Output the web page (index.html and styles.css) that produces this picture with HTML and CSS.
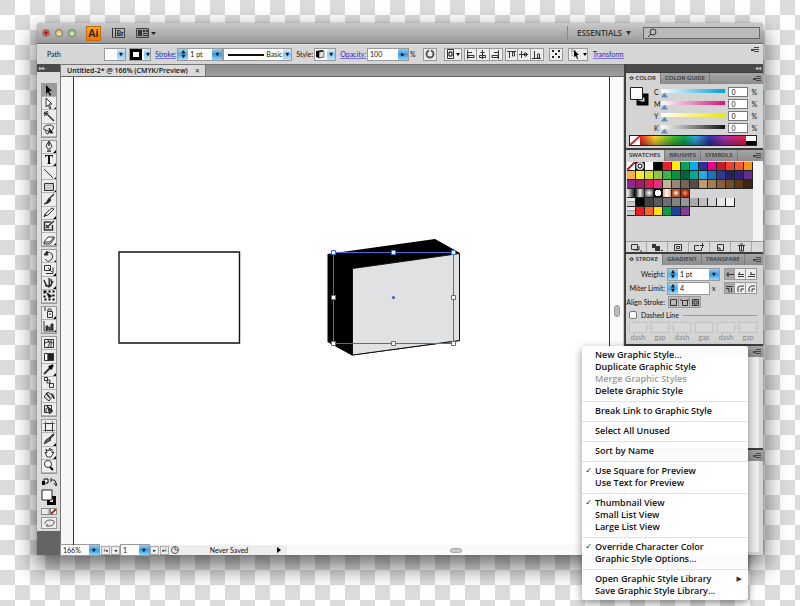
FILE: index.html
```html
<!DOCTYPE html>
<html lang="en">
<head>
<meta charset="utf-8">
<title>Untitled-2</title>
<link rel="stylesheet" href="styles.css">
</head>
<body>
<div class="window">
  <header class="titlebar">
    <button class="light red" aria-label="Close"></button>
    <button class="light amber" aria-label="Minimize"></button>
    <button class="light green" aria-label="Zoom"></button>
    <span class="logo">Ai</span>
    <button class="bridge" aria-label="Bridge"><b>Br</b></button>
    <button class="arrange" aria-label="Arrange documents"><svg width="20" height="10"><path d="M.5.5h12v9H.5z" fill="#999" stroke="#444"/><path d="M2 2h4v6H2zM7 2h2v2H7zM10 2h2v2h-2zM7 5h5v1H7zM7 7h5v1H7z" fill="#333"/><path d="M15 4h5l-2.500 3z" fill="#222"/></svg></button>
    <span class="grow"></span>
    <button class="workspace">ESSENTIALS <svg width="5" height="4"><path d="M0 0h5L2.500 4z" fill="#333"/></svg></button>
    <label class="search"><svg width="10" height="10" fill="none" stroke="#333"><circle cx="6" cy="4" r="3"/><path d="M4 6L1 9"/></svg><input aria-label="Search"></label>
  </header>

  <div class="controlbar">
    <span class="path-label">Path</span>
    <span class="combo fill"><select aria-label="Fill"><option></option></select></span>
    <span class="combo stroke-color"><i class="ring"></i><select aria-label="Stroke colour"><option></option></select></span>
    <a href="#" class="wide">Stroke:</a>
    <span class="combo weight"><i class="spin"></i><input value="1 pt" aria-label="Stroke weight"></span>
    <span class="combo brush"><i class="line"></i><select aria-label="Brush"><option>Basic</option></select></span>
    <span class="wide">Style:</span>
    <span class="combo style"><svg width="10" height="10"><path d="M1 2l6-1 2 1v6L4 9 1 8z"/><path d="M4 3l5-1v6l-5 1z" fill="#ddd" stroke="#000" stroke-width=".5"/></svg><select aria-label="Graphic style"><option></option></select></span>
    <a href="#" class="wide">Opacity:</a>
    <span class="combo opacity"><input value="100" aria-label="Opacity"></span>
    <span>%</span>
    <button class="icon first" aria-label="Recolor"><svg width="12" height="12"><circle cx="6" cy="6" r="3.500" fill="#eee" stroke="#555" stroke-width="2"/><path d="M6 1v3" stroke="#ddd" stroke-width="2"/></svg></button>
    <button class="icon drop first" aria-label="Align to"><svg width="16" height="12"><path d="M2.500 1.500h6v9h-6z" fill="none" stroke="#333"/><path d="M4 4h3v4H4z" fill="#fff" stroke="#000"/><path d="M11 5h4l-2 3z"/></svg></button>
    <span class="group" id="align-h"></span>
    <span class="group" id="align-v"></span>
    <button class="icon wide" aria-label="Isolate"><svg width="12" height="12"><path d="M2 2h2v2H2zM8 2h2v2H8zM2 8h2v2H2zM8 8h2v2H8zM5 5h2v2H5z" fill="#222"/></svg></button>
    <button class="icon drop wide" aria-label="Select similar"><svg width="18" height="12"><path d="M2 3h6M3 1v7" stroke="#666" stroke-dasharray="1 1"/><path d="M5 2l5 5H8l1 4H8L7 8 5 9zM14 5h4l-2 3z"/></svg></button>
    <a href="#" class="wide">Transform</a>
    <span class="grow"></span>
    <button class="panel-menu high" aria-label="Panel menu"></button>
  </div>

  <div class="workspace-area">
    <aside class="toolbox">
      <div class="rail-head">▸▸</div>
      <div class="tools" id="tools"></div>
      <div class="color-tools">
        <svg width="16" height="9"><path d="M3 1h4v4H3z" fill="#fff" stroke="#000"/><path d="M1 3h3v4H1z" fill="#000"/><path d="M10 2h3q2 0 2 4M10 0v4M13 5l2 3 1-3" fill="none" stroke="#222"/></svg>
        <svg width="16" height="17"><path d="M7.500 8.500h6v6h-6z" fill="none" stroke="#000" stroke-width="3"/><path d="M1 1h10v10H1z" fill="#fff" stroke="#222"/></svg>
        <div class="modes"><i></i><i></i><i></i></div>
        <button class="screen" aria-label="Screen mode"><svg width="14" height="10" fill="none" stroke="#555"><path d="M3 6q0-4 5-4t4 3-4 3H4l2-2"/></svg></button>
      </div>
    </aside>

    <main class="document">
      <div class="tabs"><button class="tab">Untitled-2* @ 166% (CMYK/Preview)<span>✕</span></button></div>
      <div class="canvas-row">
        <div class="margin"></div>
        <div class="artboard">
          <svg class="drawing" width="346" height="122" viewBox="117 237 346 122">
            <path d="M119 252h120.500v91H119z" fill="#fff" stroke="#111" stroke-width="1.400"/>
            <path d="M327.500 254L435 239l25 14v88l-108 14.500-24.500-13.500z"/>
            <path d="M352.500 268.500L459.500 253.500v87l-107 14.500z" fill="#e0e1e3" stroke="#111"/>
            <path d="M333.500 252.500h120v91h-120z" fill="none" stroke="#4169e1"/>
            <g fill="#fff" stroke="#4169e1"><path d="M331.500 250.500h4v4h-4zM391.500 250.500h4v4h-4zM451.500 250.500h4v4h-4zM331.500 295.500h4v4h-4zM451.500 295.500h4v4h-4zM331.500 341.500h4v4h-4zM391.500 341.500h4v4h-4zM451.500 341.500h4v4h-4z"/></g>
            <circle cx="393.500" cy="297.500" r="1.600" fill="#4060c8"/>
          </svg>
        </div>
        <div class="vscroll"><i></i></div>
      </div>
      <footer class="status">
        <span class="combo zoom"><input value="166%" aria-label="Zoom level"></span>
        <button aria-label="First artboard">I◂</button><button aria-label="Previous artboard">◂</button>
        <span class="combo page"><input value="1" aria-label="Artboard"></span>
        <button aria-label="Next artboard">▸</button><button aria-label="Last artboard">▸I</button>
        <svg width="10" height="10" fill="none" stroke="#555"><circle cx="5" cy="5" r="3.500"/><path d="M5 2v3h3"/></svg>
        <span class="saved">Never Saved</span>
        <svg class="more" width="5" height="8"><path d="M0 1l4 3-4 3z"/></svg>
        <div class="hscroll"><i></i></div>
      </footer>
    </main>

    <aside class="panels">
      <div class="rail-head right">◂◂</div>
      <section class="panel">
        <div class="panel-tabs"><button class="on">≎ COLOR</button><button>COLOR GUIDE</button><span class="grow"></span><button class="panel-menu" aria-label="Color menu"></button></div>
        <div class="color-body">
          <svg width="20" height="20"><path d="M8.500 8.500h8v8h-8z" fill="none" stroke="#000" stroke-width="4"/><path d="M12 8v5H8" fill="none" stroke="#fff"/><path d="M.5.5h12v12H.5z" fill="#fff" stroke="#222"/></svg>
          <div class="sliders" id="sliders"></div>
        </div>
        <div class="spectrum"><svg width="10" height="9"><path d="M0 0h10v9H0z" fill="#fff"/><path d="M0 9L10 0" stroke="#d8202f" stroke-width="2"/></svg><i class="hues"></i><i class="bw"></i></div>
      </section>

      <section class="panel">
        <div class="panel-tabs"><button class="on">SWATCHES</button><button>BRUSHES</button><button>SYMBOLS</button><span class="grow"></span><button class="panel-menu" aria-label="Swatches menu"></button></div>
        <div class="swatch-body"><div class="swatches" id="swatches"></div><div class="scroll"></div></div>
        <div class="swatch-foot">
          <button aria-label="Libraries"><svg width="12" height="9" fill="none" stroke="#333"><path d="M1.500 1.500h6v5h-6zM4 7h5V3M10 8h2"/></svg></button>
          <button aria-label="Kinds"><svg width="12" height="9"><path d="M1 1h4v4H1zM4 3h5v5H4zM10 7h2v1h-2z" fill="#333"/></svg></button>
          <button aria-label="Options"><svg width="12" height="9" fill="none" stroke="#333"><path d="M2.500 1.500h7v6h-7zM4.500 3.500h3v2h-3z"/></svg></button>
          <button aria-label="New group"><svg width="12" height="9" fill="none" stroke="#333"><path d="M6 2.500H1.500v5h7V5M7 2.500h4M9.500 0v5"/></svg></button>
          <button aria-label="New swatch"><svg width="12" height="9" fill="none" stroke="#333"><path d="M3.500 1.500h6v6h-6zM3 5h3v3"/></svg></button>
          <button aria-label="Delete"><svg width="12" height="9" fill="none" stroke="#333"><path d="M3 2.500h7M5 1h3M4.500 3v5h4V3M6.500 3v5"/></svg></button>
        </div>
      </section>

      <section class="panel">
        <div class="panel-tabs"><button class="on">≎ STROKE</button><button>GRADIENT</button><button>TRANSPARE</button><span class="grow"></span><button class="panel-menu" aria-label="Stroke menu"></button></div>
        <div class="stroke-body">
          <div class="row"><label for="weight">Weight:</label><span class="combo weight2"><i class="spin"></i><input id="weight" value="1 pt"></span><span class="push group" id="caps"></span></div>
          <div class="row"><label for="miter">Miter Limit:</label><span class="combo plain"><i class="spin"></i><input id="miter" value="4"></span><span class="times">x</span><span class="push group" id="joins"></span></div>
          <div class="row"><span class="lead">Align Stroke:</span><span class="group dark" id="align-stroke"></span></div>
          <div class="dashed"><input type="checkbox" id="dashed"><label for="dashed">Dashed Line</label><hr></div>
          <div class="dashes" id="dashes"></div>
        </div>
      </section>

      <section class="panel blank">
        <div class="panel-tabs"><span class="grow"></span><button class="panel-menu" aria-label="Styles menu"></button></div>
        <div class="blank-body"></div>
      </section>
      <section class="panel blank">
        <div class="panel-tabs"><span class="grow"></span><button class="panel-menu" aria-label="Layers menu"></button></div>
        <div class="blank-body"></div>
      </section>
    </aside>
  </div>

  <nav class="menu">
    <button>New Graphic Style...</button>
    <button>Duplicate Graphic Style</button>
    <button disabled>Merge Graphic Styles</button>
    <button>Delete Graphic Style</button>
    <hr>
    <button>Break Link to Graphic Style</button>
    <hr>
    <button>Select All Unused</button>
    <hr>
    <button>Sort by Name</button>
    <hr>
    <button class="checked">Use Square for Preview</button>
    <button>Use Text for Preview</button>
    <hr>
    <button class="checked">Thumbnail View</button>
    <button>Small List View</button>
    <button>Large List View</button>
    <hr>
    <button class="checked">Override Character Color</button>
    <button>Graphic Style Options...</button>
    <hr>
    <button class="sub">Open Graphic Style Library</button>
    <button>Save Graphic Style Library...</button>
  </nav>
</div>
<script src="app.js"></script>
</body>
</html>
```
FILE: app.js
```js
const svg = (w, h, inner) => `<svg width="${w}" height="${h}" viewBox="0 0 ${w} ${h}" fill="none" stroke="#333">${inner}</svg>`;

const toolGroups = [
  [
    ['Selection', '<path d="M4 1l6 6H7l2 4-1 1-2-4-2 2z" fill="#000" stroke="none"/>'],
    ['Direct Selection', '<path d="M4 1l6 6H7l2 4-1 1-2-4-2 2z" fill="#fff"/>', 1],
    ['Magic Wand', '<path d="M6 5l6 6" stroke-width="1.500"/><path d="M4 1v5M1.500 3.500h5M2 2l4 3M6 1L2 6"/>'],
    ['Lasso', '<path d="M2 7q-1-5 5-5t4 4-5 2-3-1 2 4q3 0 1-3" /><path d="M7 5l4 5H8z" fill="#111"/>']
  ],
  [
    ['Pen', '<path d="M7 1l3 5-2 3H6L4 6z" fill="#eee"/><path d="M7 1v5M5 11h4" stroke-width="1.500"/>', 1],
    ['Type', '<path d="M3 2h8v3l-1-2H8v7l1 1H5l1-1V3H4L3 5z" fill="#111" stroke="none"/>', 1],
    ['Line', '<path d="M2 2l9 9"/>', 1],
    ['Rectangle', '<path d="M2.500 3.500h9v7h-9z" fill="#ccc"/>', 1],
    ['Paintbrush', '<path d="M12 1L7 6" stroke-width="1.500"/><path d="M7 5l2 2q-2 4-7 4 3-1 5-6z" fill="#222"/>'],
    ['Pencil', '<path d="M3 10l1-3 6-5 2 1-6 6z" fill="#eee"/><path d="M2 11l2-2-1-1z" fill="#000"/>', 1],
    ['Blob Brush', '<path d="M9 3H2.500v8h8V6M4 9l8-7M4 6l3 3" stroke-width="1.500"/>'],
    ['Eraser', '<path d="M2 9l4-5h6l-4 5z" fill="#fff"/><path d="M2 9v2h6l4-5V4"/>', 1]
  ],
  [
    ['Rotate', '<path d="M4 3q4-2 6 1t-1 6-6-1"/><path d="M2 5l3-4 1 4z" fill="#222"/>', 1],
    ['Scale', '<path d="M2.500 2.500h6v5h-6zM4 10.500h7v-6M6 5l4 4"/>', 1],
    ['Warp', '<path d="M2 4q2 6 4 6t1-8M6 11q5 0 3-8M3 9q5 4 8-4" stroke-width="1.500"/>', 1],
    ['Free Transform', '<path d="M2.500 2.500h9v8h-9z" stroke="#000" stroke-width="2" stroke-dasharray="2 2"/><path d="M5 4l5 3-3 2z" fill="#000"/>']
  ],
  [
    ['Symbol Sprayer', '<path d="M5.500 5.500h5v6h-5zM6 5V3h3v2M2 2h2M2 4h2"/><path d="M7 8h2"/>', 1],
    ['Graph', '<path d="M2 1v10h10"/><path d="M4 6h2v4H4zM7 7h1v3H7zM9 4h2v6H9z" fill="#333"/>', 1]
  ],
  [
    ['Mesh', '<path d="M2.500 2.500h9v8h-9zM3 6q4-3 8 0M6 3q3 4 0 7M9 3v7"/>'],
    ['Gradient', '<path d="M2.500 3.500h4v7h-4z" fill="#aaa"/><path d="M6 3.500h5.500v7H6z" fill="#222"/><path d="M3 4h2v6H3z" fill="#fff" stroke="none"/>'],
    ['Eyedropper', '<path d="M2 11l6-6" stroke-width="2"/><path d="M7 3l3 3M9 4l2-2" stroke="#000" stroke-width="2.500"/>', 1],
    ['Blend', '<path d="M2.500 1.500h3v3h-3zM7.500 7.500h4v4h-4zM5 4h3v3H5z"/>'],
    ['Live Paint', '<path d="M2 7l4-5 5 4-4 5z" fill="#ddd"/><path d="M9 4q3 1 3 5M4 3l4 5" stroke-width="1.500"/>'],
    ['Live Paint Selection', '<path d="M2.500 2.500h7v7h-7z"/><path d="M5 3l6 5H8v3z" fill="#222"/><path d="M4 5v4"/>']
  ],
  [
    ['Artboard', '<path d="M3.500 1v11M10.500 1v11M1 3.500h12M1 10.500h12" stroke="#777"/><path d="M3.500 3.500h7v7h-7z"/>'],
    ['Slice', '<path d="M12 1L7 6" stroke-width="2"/><path d="M2 11l2-4 3-2 2 2z" fill="#666"/>', 1],
    ['Hand', '<path d="M3 6l2 5h4l3-5-2 1V3L8 5V2L6 5 4 3l1 4z" fill="#fff"/>', 1],
    ['Zoom', '<circle cx="6" cy="5" r="3.500" fill="#fff"/><path d="M8 8l3 3" stroke="#000" stroke-width="2"/>']
  ]
];
document.getElementById('tools').innerHTML = toolGroups.map(g =>
  `<div class="tool-group" style="flex-grow:${g.length}">` + g.map(([name, art, more]) =>
    `<button aria-label="${name}">${svg(14, 13, art + (more ? '<path d="M14 10v3h-3z" fill="#000" stroke="none"/>' : ''))}</button>`).join('') + '</div>').join('');

const fillIcons = (id, list) => {
  document.getElementById(id).innerHTML = list.map(([name, d]) =>
    `<button class="icon" aria-label="${name}">${svg(11, 11, `<path d="${d}"/>`)}</button>`).join('');
};
fillIcons('align-h', [['Align left', 'M2.500 1v9M3 3.500h4M3 6.500h6v2H3z'], ['Align center', 'M5.500 1v9M3.500 3.500h4M2.500 6.500h6v2h-6z'], ['Align right', 'M8.500 1v9M4 3.500h4M2 6.500h6v2H2z']]);
fillIcons('align-v', [['Align top', 'M1 2.500h9M3.500 3v6M6.500 3h2v4h-2z'], ['Align middle', 'M1 5.500h9M3.500 2v7M6.500 4h2v3h-2z'], ['Align bottom', 'M1 9.500h9M3.500 2v7M6.500 5h2v4h-2z']]);
fillIcons('caps', [['Butt cap', 'M4 5.500h6M4 3v5M2 5.500h2'], ['Round cap', 'M3 7.500h6M3 5.500h6M5 3L3 6'], ['Square cap', 'M2 7.500h7M4 5.500h5M5 3v3']]);
fillIcons('joins', [['Miter join', 'M2 3.500h7M2 5.500h3v4M7.500 5v4'], ['Round join', 'M3 9V4q0-1 6-1M6 9V6h3'], ['Bevel join', 'M3 9V5l2-2h4M6 9V6h3']]);
fillIcons('align-stroke', [['Center', 'M2.500 2.500h6v6h-6z'], ['Inside', 'M3.500 3.500h5v5h-5zM1 3h2M8 3h2'], ['Outside', 'M2.500 2.500h6v6h-6zM4 4h3v3H4z']]);

document.getElementById('sliders').innerHTML = [['C', '#00a0da'], ['M', '#d4147f'], ['Y', '#ece700'], ['K', '#111']].map(([n, c]) =>
  `<div class="slider"><label for="s${n}">${n}</label><input type="range" id="s${n}" value="0" style="--ink:${c}"><input class="value" value="0" aria-label="${n} value"><span>%</span></div>`).join('');

const none = 'linear-gradient(135deg,#fff 42%,#d22 43%,#d22 57%,#fff 58%)';
const target = 'radial-gradient(circle,#fff 1px,#000 2px,#fff 3px,#000 5px)';
const folder = 'linear-gradient(#e8e8e8 40%,#999 45%,#ccc 60%)';
const rows = [
  [none, target, '#fff', '#000', '#ee1c25', '#fff200', '#00a651', '#00aeef', '#2e3192', '#ec008c', '#be1e2d', '#ef4136', '#f15a29', '#f7941d'],
  ['#fbb040', '#f9ed32', '#d7df23', '#8dc63f', '#39b54a', '#009444', '#006838', '#00a79d', '#27aae1', '#1c75bc', '#2b3990', '#262262', '#312078', '#662d91'],
  ['#92278f', '#9e1f63', '#da1c5c', '#ee2a7b', '#c2b59b', '#9b8579', '#726658', '#594a42', '#c49a6c', '#a97c50', '#8b5e3c', '#754c29', '#603913', '#3c2415'],
  ['linear-gradient(90deg,#fff,#000)', 'linear-gradient(90deg,#333,#eee,#555)', 'radial-gradient(#fff,#333)', 'radial-gradient(#fff 55%,#000 60%)', 'linear-gradient(90deg,#f8a55c,#fff,#c98)', 'radial-gradient(#fff,#b5511b 60%)', 'radial-gradient(#f5a05a,#a92a12 60%)'],
  [folder, '#000', '#414042', '#58595b', '#6d6e71', '#808285', '#939598', '#a7a9ac', '#bcbec0', '#d1d3d4', '#e6e7e8', '#f1f2f2'],
  [folder, '#ed1c24', '#f26522', '#ffde17', '#00a14b', '#21409a', '#7f3f98']
];
document.getElementById('swatches').innerHTML = rows.map(r =>
  '<div class="swatch-row">' + r.map(c => `<i style="background:${c}"></i>`).join('') + '</div>').join('');

document.getElementById('dashes').innerHTML = ['dash', 'gap', 'dash', 'gap', 'dash', 'gap'].map((n, i) =>
  `<label for="d${i}"><input id="d${i}" disabled>${n}</label>`).join('');
```
FILE: styles.css
```css
* { box-sizing: border-box; }
body {
  margin: 0;
  min-height: 100vh;
  padding: 23px 37px 51px;
  display: flex;
  font: 7px/10px Lato, "Open Sans", sans-serif;
  color: #111;
  background: repeating-conic-gradient(#fff 0 25%, #dcdcdc 0 50%) 0 0 / 30px 30px;
}
button, input, select {
  font: inherit;
  color: inherit;
  border: 0;
  padding: 0;
  margin: 0;
  min-width: 0;
  background: none;
  border-radius: 0;
  appearance: none;
}
button { display: flex; align-items: center; justify-content: center; }
svg { display: block; flex: none; }
i { display: block; flex: none; }
a { color: #2222dd; border-bottom: 1px solid #7777dd; text-decoration: none; line-height: 8px; }
.grow { flex: 1; }
.wide { margin-left: 3px; }
.group { display: flex; }

.window {
  position: relative;
  flex: 1;
  min-width: 0;
  display: flex;
  flex-direction: column;
  border-radius: 4px 4px 0 0;
  background: #d6d6d6;
  box-shadow: 0 0 1px #444, 0 10px 22px 2px rgba(0, 0, 0, .55);
}

.titlebar {
  height: 21px;
  flex: none;
  display: flex;
  align-items: center;
  padding: 0 3px 0 5px;
  border-bottom: 1px solid #666;
  border-radius: 4px 4px 0 0;
  background: linear-gradient(#c9c9c9, #989898);
}
.light { width: 8px; height: 8px; border-radius: 50%; margin-right: 5px; border: 1px solid #777; }
.red { background: radial-gradient(#811 20%, #f55 50%, #b33); }
.amber { background: radial-gradient(circle at 50% 70%, #ffeeaa, #e09a3c); }
.green { background: radial-gradient(circle at 50% 70%, #ddffbb, #6cae50); }
.logo {
  width: 15px;
  height: 15px;
  margin-left: 5px;
  background: linear-gradient(#ffac22, #ea7600);
  border: 1px solid #c66a0c;
  font: bold 10px/13px "Open Sans", sans-serif;
  text-align: center;
  color: #3b1c00;
}
.bridge { margin-left: 11px; width: 13px; height: 10px; border: 1px solid #444; border-left: 4px double #333; }
.arrange { margin-left: 11px; }
.workspace {
  height: 14px;
  padding-left: 9px;
  gap: 4px;
  border-left: 1px solid #888;
  font: 600 8px/14px "Open Sans", sans-serif;
  color: #333;
}
.search {
  display: flex;
  align-items: center;
  width: 117px;
  height: 12px;
  margin-left: 12px;
  padding-left: 3px;
  border: 1px solid #666;
  background: #bababa;
}
.search input { flex: 1; }

.controlbar {
  height: 20px;
  flex: none;
  display: flex;
  align-items: center;
  gap: 2px;
  padding: 0 2px 1px 10px;
  border-top: 1px solid #e8e8e8;
  background: #d6d6d6;
  white-space: nowrap;
}
.path-label { width: 56px; }
.combo { display: flex; flex: none; height: 11px; background: #fff; box-shadow: 0 0 0 1px #999; overflow: hidden; }
.combo::after {
  content: "▼";
  width: 8px;
  flex: none;
  font: 5px/11px "DejaVu Sans", sans-serif;
  text-align: center;
  background: linear-gradient(#d8eefc, #8cc8f2 50%, #bfe6ff);
}
.combo input, .combo select { flex: 1; width: 0; padding-left: 2px; }
.fill { width: 20px; }
.stroke-color { width: 20px; margin-left: 3px; }
.ring { width: 12px; height: 11px; border: 3px solid #000; background: #fff; }
.weight { width: 44px; }
.weight::after, .opacity::after, .weight2::after, .zoom::after, .page::after { width: 10px; background: linear-gradient(#8fd0f8, #3b9ce0 50%, #8bd7ff); }
.opacity::after { content: "▶"; }
.spin { width: 10px; background: linear-gradient(#9ad4f8, #55ace6 50%, #a0dfff); }
.spin::before { content: "▲\A▼"; white-space: pre; display: block; font: 5px/5px "DejaVu Sans", sans-serif; text-align: center; }
.brush { width: 67px; }
.combo.brush select { padding: 0; }
.line { width: 36px; height: 2px; margin: 5px 2px 0 4px; background: #111; }
.style { width: 20px; }
.opacity { width: 40px; }
.icon { height: 13px; min-width: 13px; border: 1px solid #999; background: #eee; }
.icon.first { margin-left: 5px; }
.group .icon + .icon { border-left: 0; }
.panel-menu { width: 8px; height: 6px; margin-right: 2px; background: repeating-linear-gradient(#444 0 1px, transparent 1px 2px) 3px 0 / 6px 6px no-repeat; }
.panel-menu::before { content: ""; width: 3px; height: 2px; margin-right: 5px; background: #444; }
.high { align-self: flex-start; margin-top: 2px; }

.workspace-area { flex: 1; display: flex; min-height: 0; }
.rail-head { height: 8px; flex: none; font: 6px/8px "DejaVu Sans", sans-serif; color: #ddd; background: #4b4b4b; padding-left: 2px; }
.rail-head.right { text-align: right; padding-right: 2px; margin-bottom: 1px; }

.toolbox { width: 24px; flex: none; display: flex; flex-direction: column; background: #646464; border-right: 1px solid #777; }
.tools { height: 402px; flex: none; padding: 11px 3px 0 4px; display: flex; flex-direction: column; gap: 2px; background: #dcdcdc; }
.tool-group { flex: 1 1 0; display: flex; flex-direction: column; border: 1px solid #999; min-height: 0; }
.tool-group button { flex: 1 1 0; min-height: 0; background: #ededed; border-bottom: 1px solid #b5b5b5; overflow: hidden; }
.tool-group:first-child button:first-child { background: #9c9c9c; }
.color-tools { display: flex; flex-direction: column; gap: 2px; padding: 4px 3px 2px 4px; background: #dcdcdc; }
.modes { display: flex; border: 1px solid #888; height: 7px; }
.modes i { flex: 1; background: #eee; }
.modes i:nth-child(2) { background: linear-gradient(90deg, #eee, #666); }
.modes i:nth-child(3) { background: linear-gradient(135deg, #fff 35%, #d22 36% 64%, #fff 65%); }
.screen { border: 1px solid #999; background: #eee; }

.document { flex: 1; min-width: 0; display: flex; flex-direction: column; background: #fff; }
.tabs { height: 13px; flex: none; display: flex; background: linear-gradient(#8b8b8b, #a0a0a0); border-bottom: 1px solid #666; border-top: 1px solid #777; }
.tab { padding: 0 5px 0 6px; gap: 7px; font: 600 7px/11px "Open Sans", sans-serif; background: #dadada; border-right: 1px solid #777; white-space: nowrap; }
.tab span { font: 6px/11px "DejaVu Sans", sans-serif; }
.canvas-row { flex: 1; display: flex; }
.margin { width: 12px; background: #f6f6f6; }
.artboard { flex: 1; position: relative; border: 1px solid #333; border-width: 0 1px; }
.drawing { position: absolute; left: 43px; top: 160px; }
.vscroll { width: 14px; display: flex; align-items: center; justify-content: center; background: #fafafa; border-right: 1px solid #ccc; }
.vscroll i { width: 6px; height: 12px; border-radius: 3px; background: #bbb; border: 1px solid #999; }
.status { height: 10px; flex: none; display: flex; align-items: center; gap: 1px; background: #ededed; }
.status button { width: 9px; height: 9px; border: 1px solid #aaa; font: 5px/7px "DejaVu Sans", sans-serif; }
.status .combo { height: 10px; }
.zoom { width: 38px; margin-right: 1px; }
.page { width: 28px; }
.saved { width: 64px; text-align: center; margin-left: 14px; padding-left: 4px; }
.more { margin: 0 4px 0 17px; }
.hscroll { flex: 1; height: 10px; background: #fafafa; display: flex; align-items: center; justify-content: center; }
.hscroll i { width: 12px; height: 5px; border-radius: 3px; background: #ccc; border: 1px solid #aaa; }

.panels { width: 139px; flex: none; display: flex; flex-direction: column; background: #3c3c3c; border-left: 1px solid #444; padding-left: 1px; }
.panel { background: #d4d4d4; margin-bottom: 2px; }
.panel-tabs { display: flex; align-items: center; height: 11px; background: linear-gradient(#a5a5a5, #8c8c8c); }
.panel-tabs button:not(.panel-menu) { height: 11px; padding: 0 4px; font: 600 6px/11px "Open Sans", sans-serif; color: #333; border-right: 1px solid #7c7c7c; }
.panel-tabs button.on { background: #d4d4d4; padding: 0 4px 0 3px; color: #222; }
.color-body { display: flex; gap: 4px; padding: 2px 6px 1px 4px; }
.color-body > svg { margin-top: 1px; }
.sliders { flex: 1; min-width: 0; }
.slider { display: flex; align-items: center; gap: 3px; height: 12px; }
.slider label { width: 4px; }
.slider input[type=range] { flex: 1; width: 0; height: 11px; background: linear-gradient(90deg, #fff, var(--ink)) 0 2px / 100% 4px no-repeat; }
.slider input::-webkit-slider-thumb { appearance: none; width: 7px; height: 5px; margin-top: 6px; background: #5c8fc0; clip-path: polygon(50% 0, 100% 100%, 0 100%); }
.slider .value { flex: none; width: 20px; height: 10px; padding-left: 2px; background: #fff; border: 1px solid #777; }
.spectrum { display: flex; margin: 0 6px 2px 3px; border: 1px solid #222; height: 11px; }
.hues { flex: 1; background: linear-gradient(transparent, rgba(0,0,0,.35)), linear-gradient(90deg, #e22, #fd3 14%, #4b3 32%, #1a5, #3ad 52%, #33a 66%, #a3a 80%, #e25 98%); }
.bw { width: 10px; background: linear-gradient(#fff 50%, #000 50%); }
.panel:has(.spectrum) { display: flow-root; }
.swatch-body { display: flex; height: 80px; padding-left: 1px; }
.swatches { flex: 1; padding-top: 1px; }
.swatch-row { display: flex; }
.swatch-row i { width: 9px; height: 9px; border: 1px solid #222; border-width: 0 1px 1px 0; }
.scroll { width: 10px; background: #f4f4f4; }
.swatch-foot { display: flex; height: 11px; padding-right: 11px; background: #dadada; border-top: 1px solid #999; }
.swatch-foot button { flex: 1; border-right: 1px solid #aaa; }
.stroke-body { padding: 2px 6px 3px 3px; height: 79px; }
.row { display: flex; align-items: center; height: 14px; gap: 3px; }
.row label, .lead { width: 36px; text-align: right; white-space: nowrap; }
.lead { display: flex; justify-content: flex-end; }
.row .icon { height: 12px; min-width: 11px; width: 11px; }
.row .icon:first-child { background: #aaa; }
.row .dark .icon { background: #bbb; }
.push { margin-left: auto; }
.weight2 { width: 51px; }
.plain { width: 41px; }
.plain::after { display: none; }
.dashed { display: flex; align-items: center; gap: 4px; height: 12px; }
.dashed input { width: 8px; height: 8px; background: #fff; border: 1px solid #777; border-radius: 2px; }
.dashed hr { flex: 1; margin: 0; border: 0; border-top: 1px solid #999; }
.dashes { display: flex; gap: 4px; padding-top: 1px; }
.dashes label { flex: 1; display: flex; flex-direction: column; align-items: center; line-height: 8px; color: #888; }
.dashes input { width: 100%; height: 11px; border: 1px solid #c2c2c2; background: #d9d9d9; }
.blank-body { height: 91px; background: #ececec; border-right: 4px solid #d4d4d4; }
.blank:last-child { flex: 1; margin: 0; }

.menu {
  position: absolute;
  top: 323px;
  right: 15px;
  width: 166px;
  padding: 3px 0;
  border-radius: 3px;
  background: rgba(255, 255, 255, .97);
  box-shadow: 0 3px 8px rgba(0, 0, 0, .45);
  font: 600 9px/12px "Open Sans", "Noto Sans", sans-serif;
}
.menu button { width: 100%; height: 12px; justify-content: flex-start; color: #111; }
.menu button:disabled { color: #999; }
.menu button::before { content: ""; width: 13px; flex: none; text-align: center; font: 8px/12px "DejaVu Sans", sans-serif; }
.menu .checked::before { content: "✓"; }
.menu .sub::after { content: "▶"; margin: 0 6px 0 auto; font: 7px/12px "DejaVu Sans", sans-serif; color: #333; }
.menu hr { height: 1px; margin: 4px 0 3px; border: 0; background: #e2e2e2; }
```
